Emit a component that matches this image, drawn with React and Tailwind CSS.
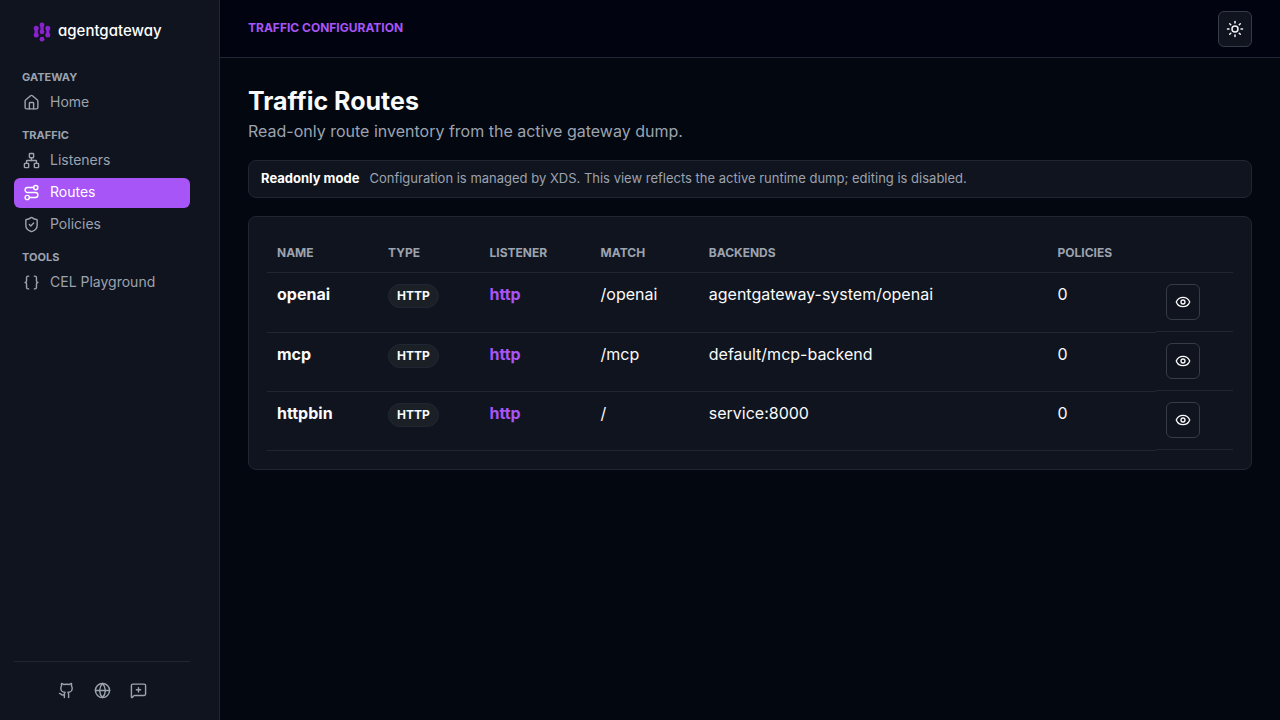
import React from "react";
import {
  Braces,
  Eye,
  Github,
  Globe,
  House,
  MessageSquarePlus,
  Network,
  Route,
  ShieldCheck,
  Sun,
} from "lucide-react";

const NAV_GROUPS = [
  { label: "GATEWAY", items: [{ name: "Home", icon: House }] },
  {
    label: "TRAFFIC",
    items: [
      { name: "Listeners", icon: Network },
      { name: "Routes", icon: Route, active: true },
      { name: "Policies", icon: ShieldCheck },
    ],
  },
  { label: "TOOLS", items: [{ name: "CEL Playground", icon: Braces }] },
];

const FOOTER_LINKS = [
  { name: "GitHub", icon: Github },
  { name: "Website", icon: Globe },
  { name: "Feedback", icon: MessageSquarePlus },
];

const ROUTES = [
  { name: "openai", match: "/openai", backend: "agentgateway-system/openai" },
  { name: "mcp", match: "/mcp", backend: "default/mcp-backend" },
  { name: "httpbin", match: "/", backend: "service:8000" },
];

function LogoMark() {
  return (
    <svg viewBox="0 0 18 20" className="h-5 w-[18px]" fill="#8a22cf" stroke="#8a22cf" aria-hidden="true">
      <g strokeWidth="3.2">
        <path d="M3.2 6v7" />
        <path d="M9 3v7" />
        <path d="M14.8 6v7" />
      </g>
      <g stroke="none">
        <circle cx="3.2" cy="6.2" r="2.5" />
        <circle cx="3.2" cy="13" r="2.5" />
        <circle cx="9" cy="2.9" r="2.4" />
        <circle cx="9" cy="9.8" r="2.4" />
        <circle cx="9" cy="17.2" r="2.4" />
        <circle cx="14.8" cy="6.2" r="2.5" />
        <circle cx="14.8" cy="13" r="2.5" />
      </g>
    </svg>
  );
}

function Sidebar() {
  return (
    <aside className="flex w-[220px] shrink-0 flex-col border-r border-[#202734] bg-[#10141e] pb-[21px] pl-3.5 pr-[29px] pt-[22px]">
      <a href="#home" className="flex h-5 items-center gap-[7px] pl-[19px] text-white">
        <LogoMark />
        <span className="pb-0.5 text-[15px] leading-5 font-medium [font-feature-settings:'cv11']">
          agentgateway
        </span>
      </a>
      <nav className="mt-[27px] flex flex-col gap-[9px]">
        {NAV_GROUPS.map((group) => (
          <div key={group.label} className="flex flex-col gap-0.5">
            <h2 className="mb-px px-2 text-[11px] leading-4 font-bold">{group.label}</h2>
            {group.items.map(({ name, icon: Icon, active }) => (
              <a
                key={name}
                href={"#" + name}
                aria-current={active ? "page" : undefined}
                className={
                  active
                    ? "flex h-[30px] items-center gap-2.5 rounded-md bg-[#a855f7] px-[9px] pb-px text-sm text-white"
                    : "flex h-[30px] items-center gap-2.5 rounded-md px-[9px] pb-px text-sm"
                }
              >
                <Icon size={17} />
                <span className="pb-px">{name}</span>
              </a>
            ))}
          </div>
        ))}
      </nav>
      <div className="mt-auto flex justify-center gap-[19px] border-t border-[#202734] pt-5">
        {FOOTER_LINKS.map(({ name, icon: Icon }) => (
          <a key={name} href={"#" + name} aria-label={name}>
            <Icon size={17} />
          </a>
        ))}
      </div>
    </aside>
  );
}

function RoutesTable() {
  return (
    <table className="w-full table-fixed border-collapse text-left">
      <thead>
        <tr className="text-xs leading-4 text-[#9ca3af] [&>*]:border-b [&>*]:border-[#202734] [&>*]:px-2.5 [&>*]:pt-2.5 [&>*]:pb-[11px] [&>*]:font-bold">
          <th className="w-[11.5%]">NAME</th>
          <th className="w-[10.5%]">TYPE</th>
          <th className="w-[11.5%]">LISTENER</th>
          <th className="w-[11.2%]">MATCH</th>
          <th>BACKENDS</th>
          <th className="w-[11.2%]">POLICIES</th>
          <td className="w-[8%]"></td>
        </tr>
      </thead>
      <tbody>
        {ROUTES.map((route) => (
          <tr
            key={route.name}
            className="align-top text-base leading-5 [&>td]:border-b [&>td]:border-[#202734] [&>td]:px-2.5 [&>td]:py-[11px]"
          >
            <td className="font-bold">{route.name}</td>
            <td>
              <span className="flex h-6 w-fit items-center rounded-full border border-[#202734] bg-[#1b2027] px-2 text-xs font-bold">
                HTTP
              </span>
            </td>
            <td>
              <a href="#listener" className="font-bold text-[#a855f7]">
                http
              </a>
            </td>
            <td>{route.match}</td>
            <td>{route.backend}</td>
            <td>0</td>
            <td className="flex">
              <button
                type="button"
                aria-label={"View " + route.name}
                className="flex h-9 w-[34px] items-center justify-center rounded-md border border-[#343b49]"
              >
                <Eye size={16} />
              </button>
            </td>
          </tr>
        ))}
      </tbody>
    </table>
  );
}

export default function App() {
  return (
    <div className="flex min-h-screen bg-[#020710] font-['Inter',sans-serif] text-[#9ca3af]">
      <Sidebar />
      <div className="flex min-w-0 flex-1 flex-col">
        <header className="flex h-[58px] items-center justify-between border-b border-[#202734] bg-[#020310] px-7">
          <p className="pb-0.5 text-xs leading-4 font-bold text-[#a855f7]">TRAFFIC CONFIGURATION</p>
          <button
            type="button"
            aria-label="Toggle theme"
            className="flex h-9 w-[34px] items-center justify-center rounded-md border border-[#343b49] bg-[#10141e] text-[#f3f4f6]"
          >
            <Sun size={18} />
          </button>
        </header>
        <main className="p-7">
          <h1 className="text-[25px] leading-[30px] font-bold text-[#f9fafb]">Traffic Routes</h1>
          <p className="mt-[3px] text-base leading-6">Read-only route inventory from the active gateway dump.</p>
          <div className="mt-[17px] flex items-center gap-2.5 rounded-lg border border-[#202734] bg-[#10141e] px-3 pt-[7px] pb-[9px] text-[13px] leading-5">
            <strong className="font-bold text-white">Readonly mode</strong>
            <span>Configuration is managed by XDS. This view reflects the active runtime dump; editing is disabled.</span>
          </div>
          <section className="mt-[18px] rounded-lg border border-[#202734] bg-[#10141e] p-[18px] text-[#f9fafb]">
            <RoutesTable />
          </section>
        </main>
      </div>
    </div>
  );
}
